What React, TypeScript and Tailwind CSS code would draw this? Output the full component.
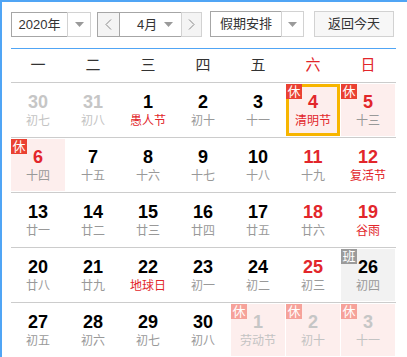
import React from "react";

type Cell = {
  d: number;
  l: string;
  numRed?: boolean;
  lunarRed?: boolean;
  faded?: boolean;
  rest?: boolean;
  work?: boolean;
  sel?: boolean;
};

const rows: Cell[][] = [
  [
    { d: 30, l: "初七", faded: true },
    { d: 31, l: "初八", faded: true },
    { d: 1, l: "愚人节", lunarRed: true },
    { d: 2, l: "初十" },
    { d: 3, l: "十一" },
    { d: 4, l: "清明节", numRed: true, lunarRed: true, rest: true, sel: true },
    { d: 5, l: "十三", numRed: true, rest: true },
  ],
  [
    { d: 6, l: "十四", numRed: true, rest: true },
    { d: 7, l: "十五" },
    { d: 8, l: "十六" },
    { d: 9, l: "十七" },
    { d: 10, l: "十八" },
    { d: 11, l: "十九", numRed: true },
    { d: 12, l: "复活节", numRed: true, lunarRed: true },
  ],
  [
    { d: 13, l: "廿一" },
    { d: 14, l: "廿二" },
    { d: 15, l: "廿三" },
    { d: 16, l: "廿四" },
    { d: 17, l: "廿五" },
    { d: 18, l: "廿六", numRed: true },
    { d: 19, l: "谷雨", numRed: true, lunarRed: true },
  ],
  [
    { d: 20, l: "廿八" },
    { d: 21, l: "廿九" },
    { d: 22, l: "地球日", lunarRed: true },
    { d: 23, l: "初一" },
    { d: 24, l: "初二" },
    { d: 25, l: "初三", numRed: true },
    { d: 26, l: "初四", work: true },
  ],
  [
    { d: 27, l: "初五" },
    { d: 28, l: "初六" },
    { d: 29, l: "初七" },
    { d: 30, l: "初八" },
    { d: 1, l: "劳动节", faded: true, rest: true },
    { d: 2, l: "初十", faded: true, rest: true },
    { d: 3, l: "十一", faded: true, rest: true },
  ],
];

const weekdays = ["一", "二", "三", "四", "五", "六", "日"];

const FONT = { fontFamily: '"Liberation Sans", "Noto Sans CJK SC", sans-serif' };

function Caret() {
  return (
    <svg width="9" height="5" viewBox="0 0 9 5">
      <path d="M0 0 L9 0 L4.5 5 Z" fill="#9a9a9a" />
    </svg>
  );
}

function Chevron({ dir }: { dir: "l" | "r" }) {
  return (
    <svg width="7" height="11" viewBox="0 0 7 11">
      <polyline
        points={dir === "l" ? "6,0.5 1,5.5 6,10.5" : "1,0.5 6,5.5 1,10.5"}
        fill="none"
        stroke="#888"
        strokeWidth="1"
      />
    </svg>
  );
}

function DayCell({ c }: { c: Cell }) {
  let bg = "bg-white";
  if (c.rest) bg = "bg-[#fdeeed]";
  if (c.work) bg = "bg-[#f2f2f2]";
  let numColor = "text-black";
  if (c.numRed) numColor = "text-[#e2262b]";
  if (c.faded) numColor = "text-[#c6c6c6]";
  let lunarColor = "text-[#999999]";
  if (c.lunarRed) lunarColor = "text-[#e2262b]";
  if (c.faded) lunarColor = "text-[#c3c3c3]";
  return (
    <div className={`relative w-[54px] h-[52px] ${bg} flex flex-col items-center`}>
      {c.sel && <div className="absolute inset-0 border-[3px] border-[#f7b500]" />}
      <div className={`pt-[8px] text-[18px] leading-[20px] font-bold ${numColor}`}>{c.d}</div>
      <div className={`mt-[1px] text-[12px] leading-[16px] ${lunarColor}`}>{c.l}</div>
      {c.rest && (
        <div
          className={`absolute left-0 top-0 w-[16px] h-[15px] flex items-center justify-center text-[13px] leading-[15px] text-white ${
            c.faded ? "bg-[#f6a29a]" : "bg-[#ea4132]"
          }`}
        >
          休
        </div>
      )}
      {c.work && (
        <div className="absolute left-0 top-0 w-[16px] h-[15px] flex items-center justify-center text-[13px] leading-[15px] text-white bg-[#9b9b9b]">
          班
        </div>
      )}
    </div>
  );
}

export default function App() {
  return (
    <div
      className="w-[407px] h-[357px] overflow-hidden bg-white border-l-2 border-t-2 border-[#50a5f5] pl-[9px] pt-[10px]"
      style={FONT}
    >
      {/* controls */}
      <div className="flex items-start h-[25px] text-[13px] text-[#333]">
        {/* year */}
        <div className="flex h-[25px]">
          <div className="w-[56px] h-full border border-[#a6a6a6] border-r-0 flex items-center justify-center">
            2020年
          </div>
          <div className="w-[24px] h-full border border-[#d2d2d2] flex items-center justify-center">
            <Caret />
          </div>
        </div>
        {/* month */}
        <div className="flex h-[25px] ml-[6px]">
          <div className="w-[23px] h-full border border-[#a6a6a6] bg-[#f4f4f4] flex items-center justify-center">
            <Chevron dir="l" />
          </div>
          <div className="w-[61px] h-full border-y border-[#a6a6a6] flex items-center">
            <span className="ml-[17px]">4月</span>
            <span className="ml-auto mr-[8px] flex">
              <Caret />
            </span>
          </div>
          <div className="w-[21px] h-full border border-[#d2d2d2] bg-[#f4f4f4] flex items-center justify-center">
            <Chevron dir="r" />
          </div>
        </div>
        {/* holiday */}
        <div className="flex h-[26px] ml-[8px] -mt-[1px]">
          <div className="w-[71px] h-full border border-[#a6a6a6] border-r-0 flex items-center justify-center">
            假期安排
          </div>
          <div className="w-[23px] h-full border border-[#d2d2d2] flex items-center justify-center">
            <Caret />
          </div>
        </div>
        {/* today */}
        <div className="ml-[10px] w-[80px] h-[26px] -mt-[1px] border border-[#d2d2d2] bg-[#f7f7f7] flex items-center justify-center">
          返回今天
        </div>
      </div>

      {/* calendar */}
      <div className="mt-[11px] w-[385px] border-t border-[#50a5f5]">
        <div className="grid grid-cols-[repeat(7,55px)] h-[33px]">
          {weekdays.map((w, i) => (
            <div
              key={w}
              className={`w-[54px] flex items-center justify-center text-[15px] ${
                i >= 5 ? "text-[#e2262b]" : "text-[#333]"
              }`}
            >
              {w}
            </div>
          ))}
        </div>
        {rows.map((r, ri) => (
          <div key={ri} className="border-t border-[#cccccc] py-[1px] grid grid-cols-[repeat(7,55px)]">
            {r.map((c, ci) => (
              <DayCell key={ci} c={c} />
            ))}
          </div>
        ))}
      </div>
    </div>
  );
}
